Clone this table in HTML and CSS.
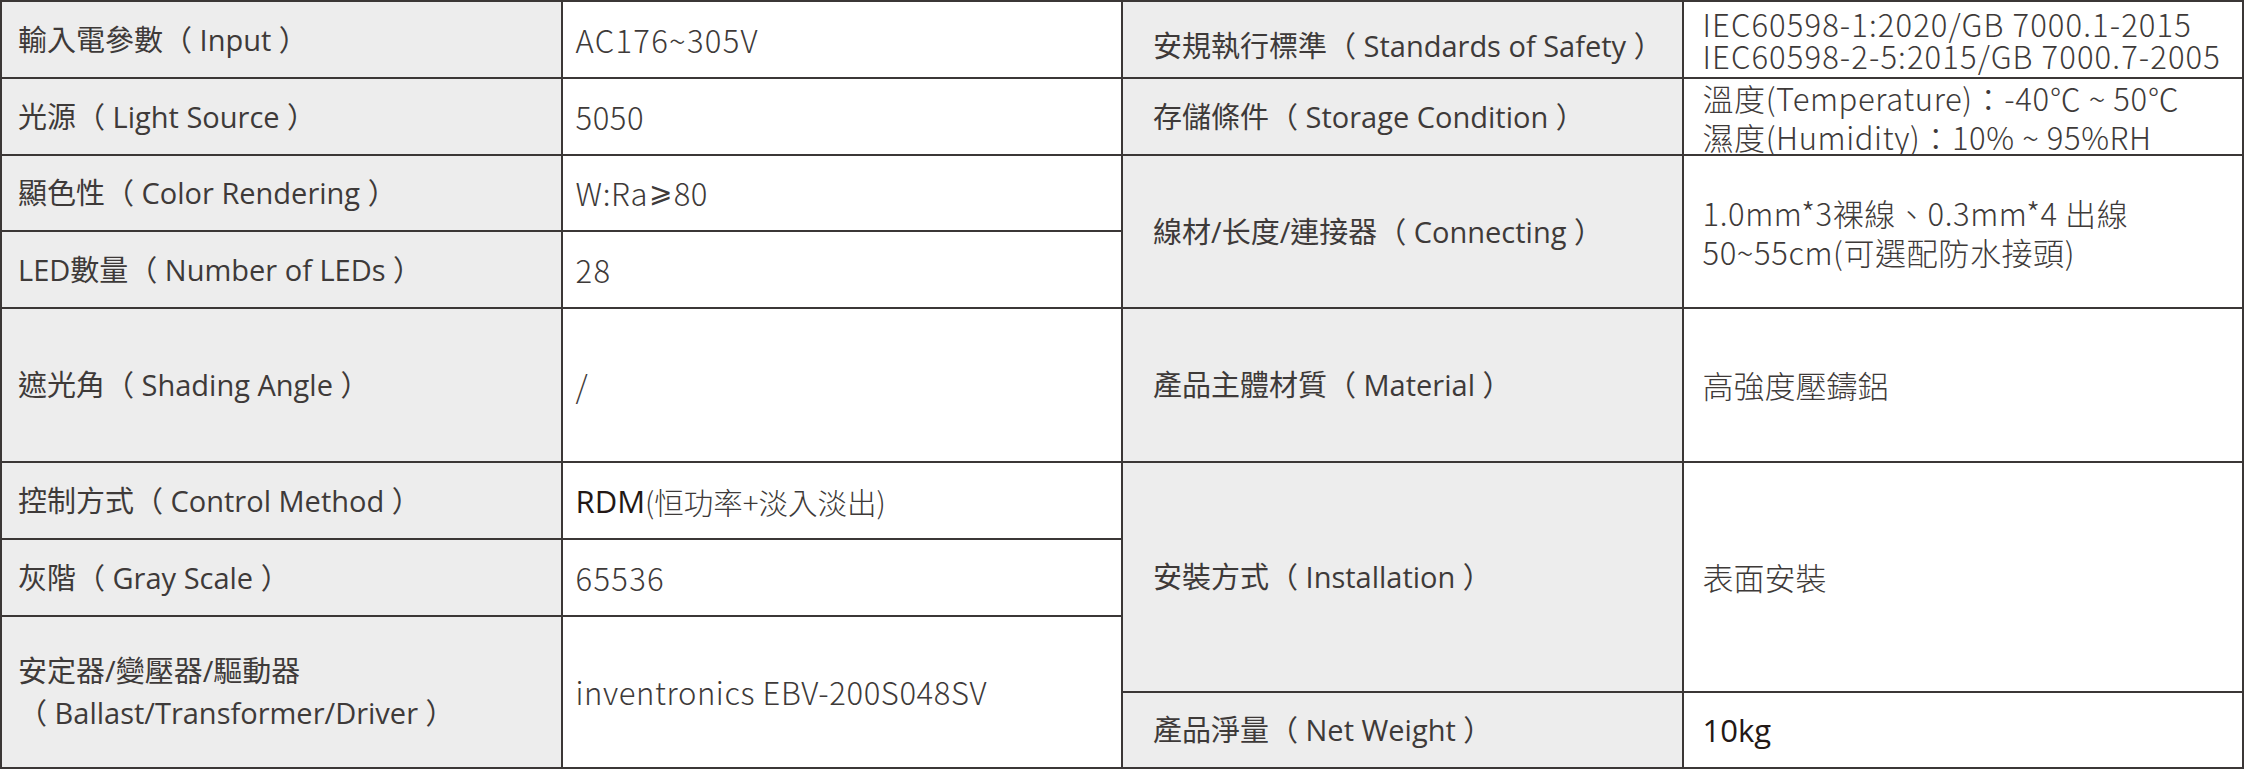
FILE: index.html
```html
<!DOCTYPE html>
<html lang="zh-Hant">
<head>
<meta charset="utf-8">
<title>規格</title>
<link rel="stylesheet" href="styles.css">
</head>
<body>
<div class="spec">
  <div class="cell lbl-l">輸入電參數（ Input ）</div>
  <div class="cell val-l num">AC176~305V</div>
  <div class="cell lbl-r low">安規執行標準（ Standards of Safety ）</div>
  <div class="cell val-r tight">IEC60598-1:2020/GB 7000.1-2015<br>IEC60598-2-5:2015/GB 7000.7-2005</div>

  <div class="cell lbl-l">光源（ Light Source ）</div>
  <div class="cell val-l">5050</div>
  <div class="cell lbl-r">存儲條件（ Storage Condition ）</div>
  <div class="cell val-r multi">溫度(Temperature)：-40℃ ~ 50℃<br>濕度(Humidity)：10% ~ 95%RH</div>

  <div class="cell lbl-l">顯色性（ Color Rendering ）</div>
  <div class="cell val-l">W:Ra<span class="geq">⩾</span>80</div>
  <div class="cell lbl-r span2">線材/长度/連接器（ Connecting ）</div>
  <div class="cell val-r multi span2">1.0mm*3裸線、0.3mm*4 出線<br>50~55cm(可選配防水接頭)</div>

  <div class="cell lbl-l">LED數量（ Number of LEDs ）</div>
  <div class="cell val-l num">28</div>

  <div class="cell lbl-l">遮光角（ Shading Angle ）</div>
  <div class="cell val-l">/</div>
  <div class="cell lbl-r">產品主體材質（ Material ）</div>
  <div class="cell val-r cjk">高強度壓鑄鋁</div>

  <div class="cell lbl-l">控制方式（ Control Method ）</div>
  <div class="cell val-l"><span class="dark">RDM</span><span class="small">(恒功率+淡入淡出)</span></div>
  <div class="cell lbl-r span3">安裝方式（ Installation ）</div>
  <div class="cell val-r cjk span3">表面安裝</div>

  <div class="cell lbl-l">灰階（ Gray Scale ）</div>
  <div class="cell val-l num">65536</div>

  <div class="cell lbl-l span2">安定器/變壓器/驅動器<br>（ Ballast/Transformer/Driver ）</div>
  <div class="cell val-l span2">inventronics EBV-200S048SV</div>

  <div class="cell lbl-r">產品淨量（ Net Weight ）</div>
  <div class="cell val-r"><span class="dark">10kg</span></div>
</div>
</body>
</html>
```
FILE: styles.css
```css
html, body {
  margin: 0;
  padding: 0;
  background: #ffffff;
}

.spec {
  box-sizing: border-box;
  width: 2244px;
  height: 769px;
  display: grid;
  grid-template-columns: repeat(4, 1fr);
  grid-template-rows: 75px 75px 74px 75px 152px 75px 75px 74px 74px;
  gap: 2px;
  padding: 2px;
  background: #3b3736;
}

.cell {
  display: flex;
  align-items: center;
  color: #3e3a39;
  white-space: nowrap;
  overflow: hidden;
}

.lbl-l,
.lbl-r {
  background: #ededed;
  font-family: "Open Sans", "Noto Sans CJK TC", sans-serif;
  font-size: 29px;
  font-weight: 400;
  line-height: 42px;
}

.lbl-l {
  padding-left: 16px;
}

.lbl-r {
  padding-left: 30px;
}

.low {
  padding-top: 12px;
}

.val-l,
.val-r {
  background: #ffffff;
  font-family: "Noto Sans CJK TC", sans-serif;
  font-size: 31px;
  font-weight: 300;
  line-height: 40px;
  letter-spacing: 0.6px;
}

.val-l {
  padding-left: 13px;
}

.val-r {
  padding-left: 19px;
}

.num {
  letter-spacing: 1.3px;
}

.cjk {
  letter-spacing: 0;
}

.tight {
  line-height: 32px;
  letter-spacing: 1.1px;
}

.multi {
  line-height: 39px;
}

.geq {
  font-family: "DejaVu Sans", sans-serif;
  font-size: 28px;
  padding: 0 1px;
}

.small {
  font-size: 29.5px;
  letter-spacing: 0;
}

.span2 {
  grid-row: span 2;
}

.span3 {
  grid-row: span 3;
}

.dark {
  color: #231815;
  font-family: "Open Sans", "Noto Sans CJK TC", sans-serif;
  font-weight: 400;
  letter-spacing: 0;
}
```
